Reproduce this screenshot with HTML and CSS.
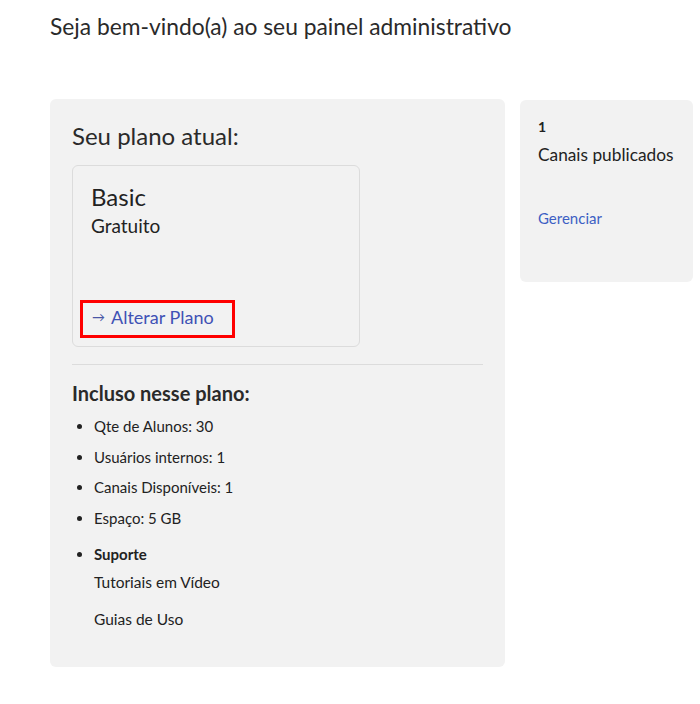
FILE: index.html
```html
<!DOCTYPE html>
<html lang="pt-BR">
<head>
<meta charset="utf-8">
<title>Painel</title>
<link rel="stylesheet" href="styles.css">
</head>
<body>
<div class="page">
  <h1 class="welcome">Seja bem-vindo(a) ao seu painel administrativo</h1>
  <div class="cards">
    <section class="card main-card">
      <h2 class="card-title">Seu plano atual:</h2>
      <div class="plan-box">
        <div class="plan-name">Basic</div>
        <div class="plan-price">Gratuito</div>
        <a class="change-plan" href="#"><span class="arrow">→</span> Alterar Plano</a>
      </div>
      <hr class="divider">
      <h3 class="included-title">Incluso nesse plano:</h3>
      <ul class="features">
        <li>Qte de Alunos: 30</li>
        <li>Usuários internos: 1</li>
        <li>Canais Disponíveis: 1</li>
        <li>Espaço: 5 GB</li>
        <li class="support"><strong>Suporte</strong>
          <p>Tutoriais em Vídeo</p>
          <p>Guias de Uso</p>
        </li>
      </ul>
    </section>
    <aside class="card side-card">
      <div class="stat-num">1</div>
      <div class="stat-label">Canais publicados</div>
      <a class="manage" href="#">Gerenciar</a>
    </aside>
  </div>
</div>
</body>
</html>
```
FILE: styles.css
```css
* { box-sizing: border-box; }
html, body { margin: 0; padding: 0; background: #fff; }
body {
  font-family: Lato, "Noto Sans", sans-serif;
  color: #222;
}
.page { padding: 12px 0 0 50px; }
.welcome {
  margin: 0;
  font-size: 22.8px;
  font-weight: 400;
  line-height: 28px;
  color: #2a2a2a;
}
.cards {
  display: flex;
  align-items: flex-start;
  gap: 15px;
  margin-top: 59px;
}
.card {
  background: #f2f2f2;
  border-radius: 6px;
}
.main-card {
  width: 455px;
  height: 568px;
  padding: 22px 22px;
}
.card-title {
  margin: 0;
  font-size: 24px;
  font-weight: 400;
  line-height: 30px;
  color: #2a2a2a;
}
.plan-box {
  margin-top: 14px;
  width: 288px;
  height: 182px;
  border: 1px solid #dcdcdc;
  border-radius: 6px;
  padding: 16px 18px;
  display: flex;
  flex-direction: column;
  align-items: flex-start;
}
.plan-name { font-size: 24px; line-height: 30px; color: #222; }
.plan-price { font-size: 19px; line-height: 24px; margin-top: 2px; color: #222; }
.change-plan {
  margin-top: auto;
  margin-left: -11px;
  margin-bottom: -8px;
  width: 155px;
  height: 38px;
  border: 3px solid #ff0000;
  padding: 0 0 5px 9px;
  display: flex;
  align-items: center;
  font-size: 18px;
  color: #3f51b5;
  text-decoration: none;
}
.arrow { font-size: 13px; margin-right: 6px; color: #4a56a6; }
.divider {
  margin: 17px 0 0;
  border: 0;
  border-top: 1px solid #dcdcdc;
  width: 411px;
}
.included-title {
  margin: 15px 0 0;
  font-size: 20px;
  font-weight: 700;
  line-height: 26px;
  color: #2a2a2a;
}
.features {
  margin: 10px 0 0;
  padding-left: 22px;
  font-size: 15px;
  line-height: 20px;
  color: #222;
}
.features li { margin-bottom: 10.7px; }
.features li.support { margin-top: 16px; }
.support strong { font-weight: 700; }
.support p { margin: 8px 0 0; font-size: 15.5px; }
.support p + p { margin-top: 17px; }
.side-card {
  width: 173px;
  height: 182px;
  margin-top: 1px;
  padding: 18px 18px;
}
.stat-num { font-size: 14px; font-weight: 700; line-height: 18px; }
.stat-label { font-size: 17.3px; line-height: 22px; margin-top: 8px; color: #222; }
.manage {
  display: block;
  margin-top: 43px;
  font-size: 15px;
  color: #3d5fc4;
  text-decoration: none;
}
```
